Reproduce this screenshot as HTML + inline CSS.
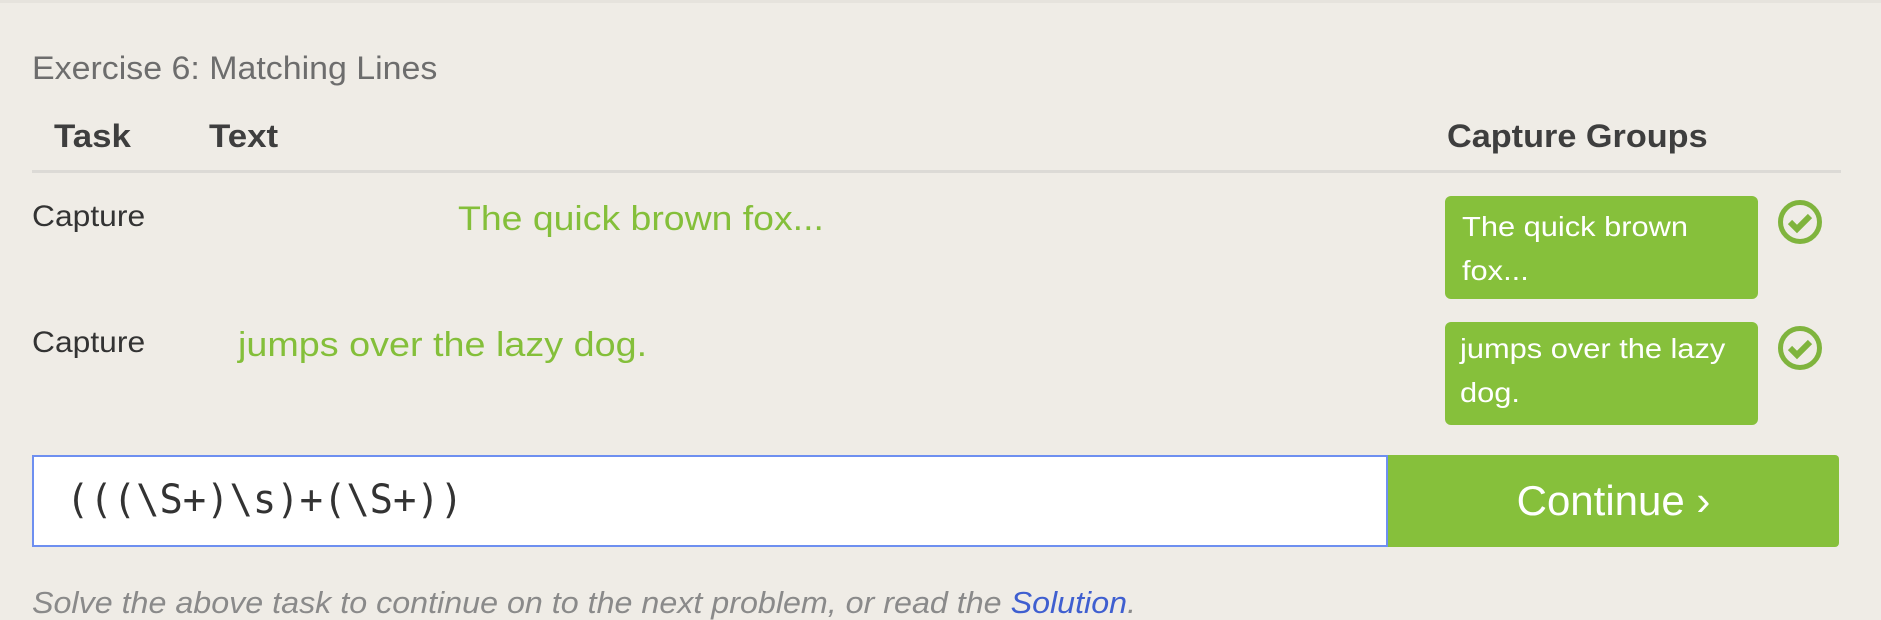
<!DOCTYPE html>
<html><head><style>
html,body{margin:0;padding:0;}
body{width:1881px;height:604px;overflow:hidden;background:#efece6;font-family:"Liberation Sans",sans-serif;position:relative;border-top:3px solid #e6e3dd;box-sizing:border-box;}
.a{position:absolute;white-space:nowrap;line-height:1;}
.sq{transform-origin:left center;display:inline-block;}
</style></head><body>
<div class="a" style="left:32px;top:49px;font-size:32px;color:#6d6d6d;"><span class="sq" style="transform:scaleX(1.06)">Exercise 6: Matching Lines</span></div>
<div class="a" style="left:54px;top:117px;font-size:32px;font-weight:bold;color:#3e3e3e;"><span class="sq" style="transform:scaleX(1.09)">Task</span></div>
<div class="a" style="left:209px;top:117px;font-size:32px;font-weight:bold;color:#3e3e3e;"><span class="sq" style="transform:scaleX(1.09)">Text</span></div>
<div class="a" style="left:1447px;top:117px;font-size:32px;font-weight:bold;color:#3e3e3e;"><span class="sq" style="transform:scaleX(1.07)">Capture Groups</span></div>
<div class="a" style="left:32px;top:167px;width:1809px;height:3px;background:#dcdad6;"></div>

<div class="a" style="left:32px;top:199px;font-size:30px;color:#333;"><span class="sq" style="transform:scaleX(1.06)">Capture</span></div>
<div class="a" style="left:458px;top:199px;font-size:34px;color:#84bf3a;"><span class="sq" style="transform:scaleX(1.1)">The quick brown fox...</span></div>
<div class="a" style="left:32px;top:325px;font-size:30px;color:#333;"><span class="sq" style="transform:scaleX(1.06)">Capture</span></div>
<div class="a" style="left:238px;top:325px;font-size:34px;color:#84bf3a;"><span class="sq" style="transform:scaleX(1.11)">jumps over the lazy dog.</span></div>

<div class="a" style="left:1445px;top:193px;width:313px;height:103px;background:#86c03b;border-radius:6px;"></div>
<div class="a" style="left:1462px;top:202px;font-size:28px;color:#fff;line-height:44px;"><span class="sq" style="transform:scaleX(1.1)">The quick brown<br>fox...</span></div>
<div class="a" style="left:1445px;top:319px;width:313px;height:103px;background:#86c03b;border-radius:6px;"></div>
<div class="a" style="left:1460px;top:324px;font-size:28px;color:#fff;line-height:44px;"><span class="sq" style="transform:scaleX(1.1)">jumps over the lazy<br>dog.</span></div>

<svg class="a" style="left:1777px;top:196px" width="46" height="46" viewBox="0 0 46 46"><circle cx="23" cy="23" r="19.5" fill="none" stroke="#7fb43d" stroke-width="5"/><path d="M13 23 L20 30 L33 17" fill="none" stroke="#7fb43d" stroke-width="6"/></svg>
<svg class="a" style="left:1777px;top:322px" width="46" height="46" viewBox="0 0 46 46"><circle cx="23" cy="23" r="19.5" fill="none" stroke="#7fb43d" stroke-width="5"/><path d="M13 23 L20 30 L33 17" fill="none" stroke="#7fb43d" stroke-width="6"/></svg>

<div class="a" style="left:32px;top:452px;width:1356px;height:92px;background:#fff;border:2px solid #6e8ff0;box-sizing:border-box;"></div>
<div class="a" style="left:66px;top:477px;font-size:40px;font-family:'DejaVu Sans Mono','Liberation Mono',monospace;color:#333;"><span class="sq" style="transform:scaleX(0.97)">(((\S+)\s)+(\S+))</span></div>
<div class="a" style="left:1388px;top:452px;width:451px;height:92px;background:#86c03b;border-radius:0 4px 4px 0;"></div>
<div class="a" style="left:1388px;top:477px;width:451px;text-align:center;font-size:42px;color:#fff;">Continue ›</div>

<div class="a" style="left:32px;top:584px;font-size:31px;font-style:italic;color:#8a8a8a;"><span class="sq" style="transform:scaleX(1.04)">Solve the above task to continue on to the next problem, or read the <span style="color:#3f5fd0">Solution</span>.</span></div>
</body></html>
